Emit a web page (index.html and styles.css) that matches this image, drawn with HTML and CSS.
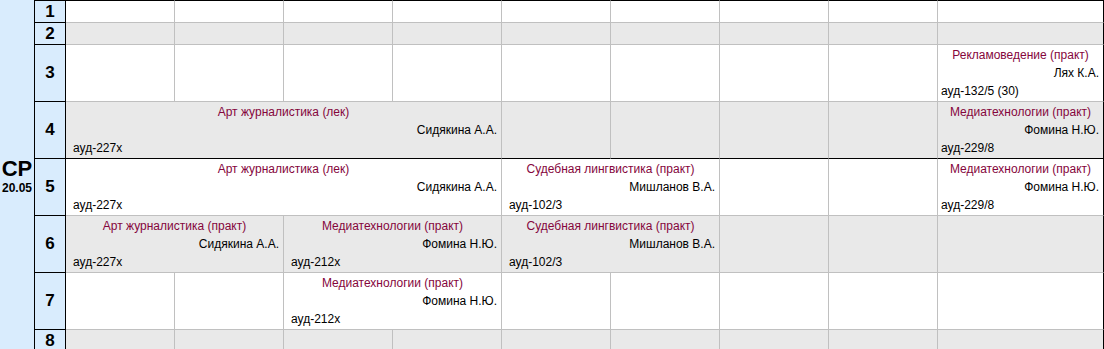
FILE: index.html
```html
<!DOCTYPE html>
<html lang="ru">
<head>
<meta charset="utf-8">
<title>Расписание</title>
<link rel="stylesheet" href="styles.css">
</head>
<body>
<div class="sched">
  <div class="day"><span class="day-name">СР</span><span class="day-date">20.05</span></div>

  <div class="num first">1</div>
  <div class="cell first"></div><div class="cell first"></div><div class="cell first"></div><div class="cell first"></div><div class="cell first"></div><div class="cell first"></div><div class="cell first"></div><div class="cell first"></div><div class="cell first last"></div>

  <div class="num">2</div>
  <div class="cell alt"></div><div class="cell alt"></div><div class="cell alt"></div><div class="cell alt"></div><div class="cell alt"></div><div class="cell alt"></div><div class="cell alt"></div><div class="cell alt"></div><div class="cell alt last"></div>

  <div class="num">3</div>
  <div class="cell"></div><div class="cell"></div><div class="cell"></div><div class="cell"></div><div class="cell"></div><div class="cell"></div><div class="cell"></div><div class="cell"></div>
  <div class="cell last lesson"><span class="subj">Рекламоведение (практ)</span><span class="teach">Лях К.А.</span><span class="room narrow">ауд-132/5 (30)</span></div>

  <div class="num">4</div>
  <div class="cell alt dark lesson span4"><span class="subj">Арт журналистика (лек)</span><span class="teach">Сидякина А.А.</span><span class="room">ауд-227х</span></div>
  <div class="cell alt dark"></div><div class="cell alt dark"></div><div class="cell alt dark"></div><div class="cell alt dark"></div>
  <div class="cell alt dark last lesson"><span class="subj">Медиатехнологии (практ)</span><span class="teach">Фомина Н.Ю.</span><span class="room narrow">ауд-229/8</span></div>

  <div class="num">5</div>
  <div class="cell lesson span4"><span class="subj">Арт журналистика (лек)</span><span class="teach">Сидякина А.А.</span><span class="room">ауд-227х</span></div>
  <div class="cell lesson span2"><span class="subj">Судебная лингвистика (практ)</span><span class="teach">Мишланов В.А.</span><span class="room">ауд-102/3</span></div>
  <div class="cell"></div><div class="cell"></div>
  <div class="cell last lesson"><span class="subj">Медиатехнологии (практ)</span><span class="teach">Фомина Н.Ю.</span><span class="room narrow">ауд-229/8</span></div>

  <div class="num">6</div>
  <div class="cell alt lesson span2"><span class="subj">Арт журналистика (практ)</span><span class="teach">Сидякина А.А.</span><span class="room">ауд-227х</span></div>
  <div class="cell alt lesson span2"><span class="subj">Медиатехнологии (практ)</span><span class="teach">Фомина Н.Ю.</span><span class="room">ауд-212х</span></div>
  <div class="cell alt lesson span2"><span class="subj">Судебная лингвистика (практ)</span><span class="teach">Мишланов В.А.</span><span class="room">ауд-102/3</span></div>
  <div class="cell alt"></div><div class="cell alt"></div><div class="cell alt last"></div>

  <div class="num">7</div>
  <div class="cell"></div><div class="cell"></div>
  <div class="cell lesson span2"><span class="subj">Медиатехнологии (практ)</span><span class="teach">Фомина Н.Ю.</span><span class="room">ауд-212х</span></div>
  <div class="cell"></div><div class="cell"></div><div class="cell"></div><div class="cell"></div><div class="cell last"></div>

  <div class="num">8</div>
  <div class="cell alt"></div><div class="cell alt"></div><div class="cell alt"></div><div class="cell alt"></div><div class="cell alt"></div><div class="cell alt"></div><div class="cell alt"></div><div class="cell alt"></div><div class="cell alt last"></div>
</div>
</body>
</html>
```

FILE: styles.css
```css
* { box-sizing: border-box; }

html, body {
  margin: 0;
  padding: 0;
  background: #fff;
  overflow: hidden;
}

body {
  font-family: "Liberation Sans", Arial, sans-serif;
  font-size: 12px;
  color: #000;
}

.sched {
  display: grid;
  width: 1104px;
  grid-template-columns: 35px 31px repeat(8, 109px) 166px;
  grid-template-rows: 23px 22px 57px 57px 57px 57px 57px 22px;
}

.day {
  grid-row: 1 / span 8;
  grid-column: 1;
  background: #d9ecfd;
  border-right: 1px solid #000;
  display: flex;
  flex-direction: column;
  align-items: center;
  justify-content: center;
}

.day-name {
  font-weight: bold;
  font-size: 22px;
  line-height: 22px;
}

.day-date {
  font-weight: bold;
  font-size: 12px;
  line-height: 14px;
  margin-top: 1px;
}

.num {
  grid-column: 2;
  background: #d9ecfd;
  border-right: 1px solid #000;
  border-bottom: 1px solid #000;
  display: flex;
  align-items: center;
  justify-content: center;
  font-weight: bold;
  font-size: 17px;
}

.num.first { border-top: 1px solid #000; }

.cell {
  background: #fff;
  border-right: 1px solid #c0c0c0;
  border-bottom: 1px solid #c0c0c0;
}

.cell.first { border-top: 1px solid #000; }
.cell.alt { background: #e9e9e9; }
.cell.dark { border-bottom-color: #000; }
.cell.last { border-right-color: #000; }

.span2 { grid-column: span 2; }
.span4 { grid-column: span 4; }

.lesson {
  display: flex;
  flex-direction: column;
  padding-top: 1px;
  line-height: 18px;
  white-space: nowrap;
}

.subj {
  color: #85063c;
  text-align: center;
}

.teach {
  text-align: right;
  padding-right: 4px;
}

.room {
  padding-left: 7px;
}

.room.narrow {
  padding-left: 3px;
}
```
